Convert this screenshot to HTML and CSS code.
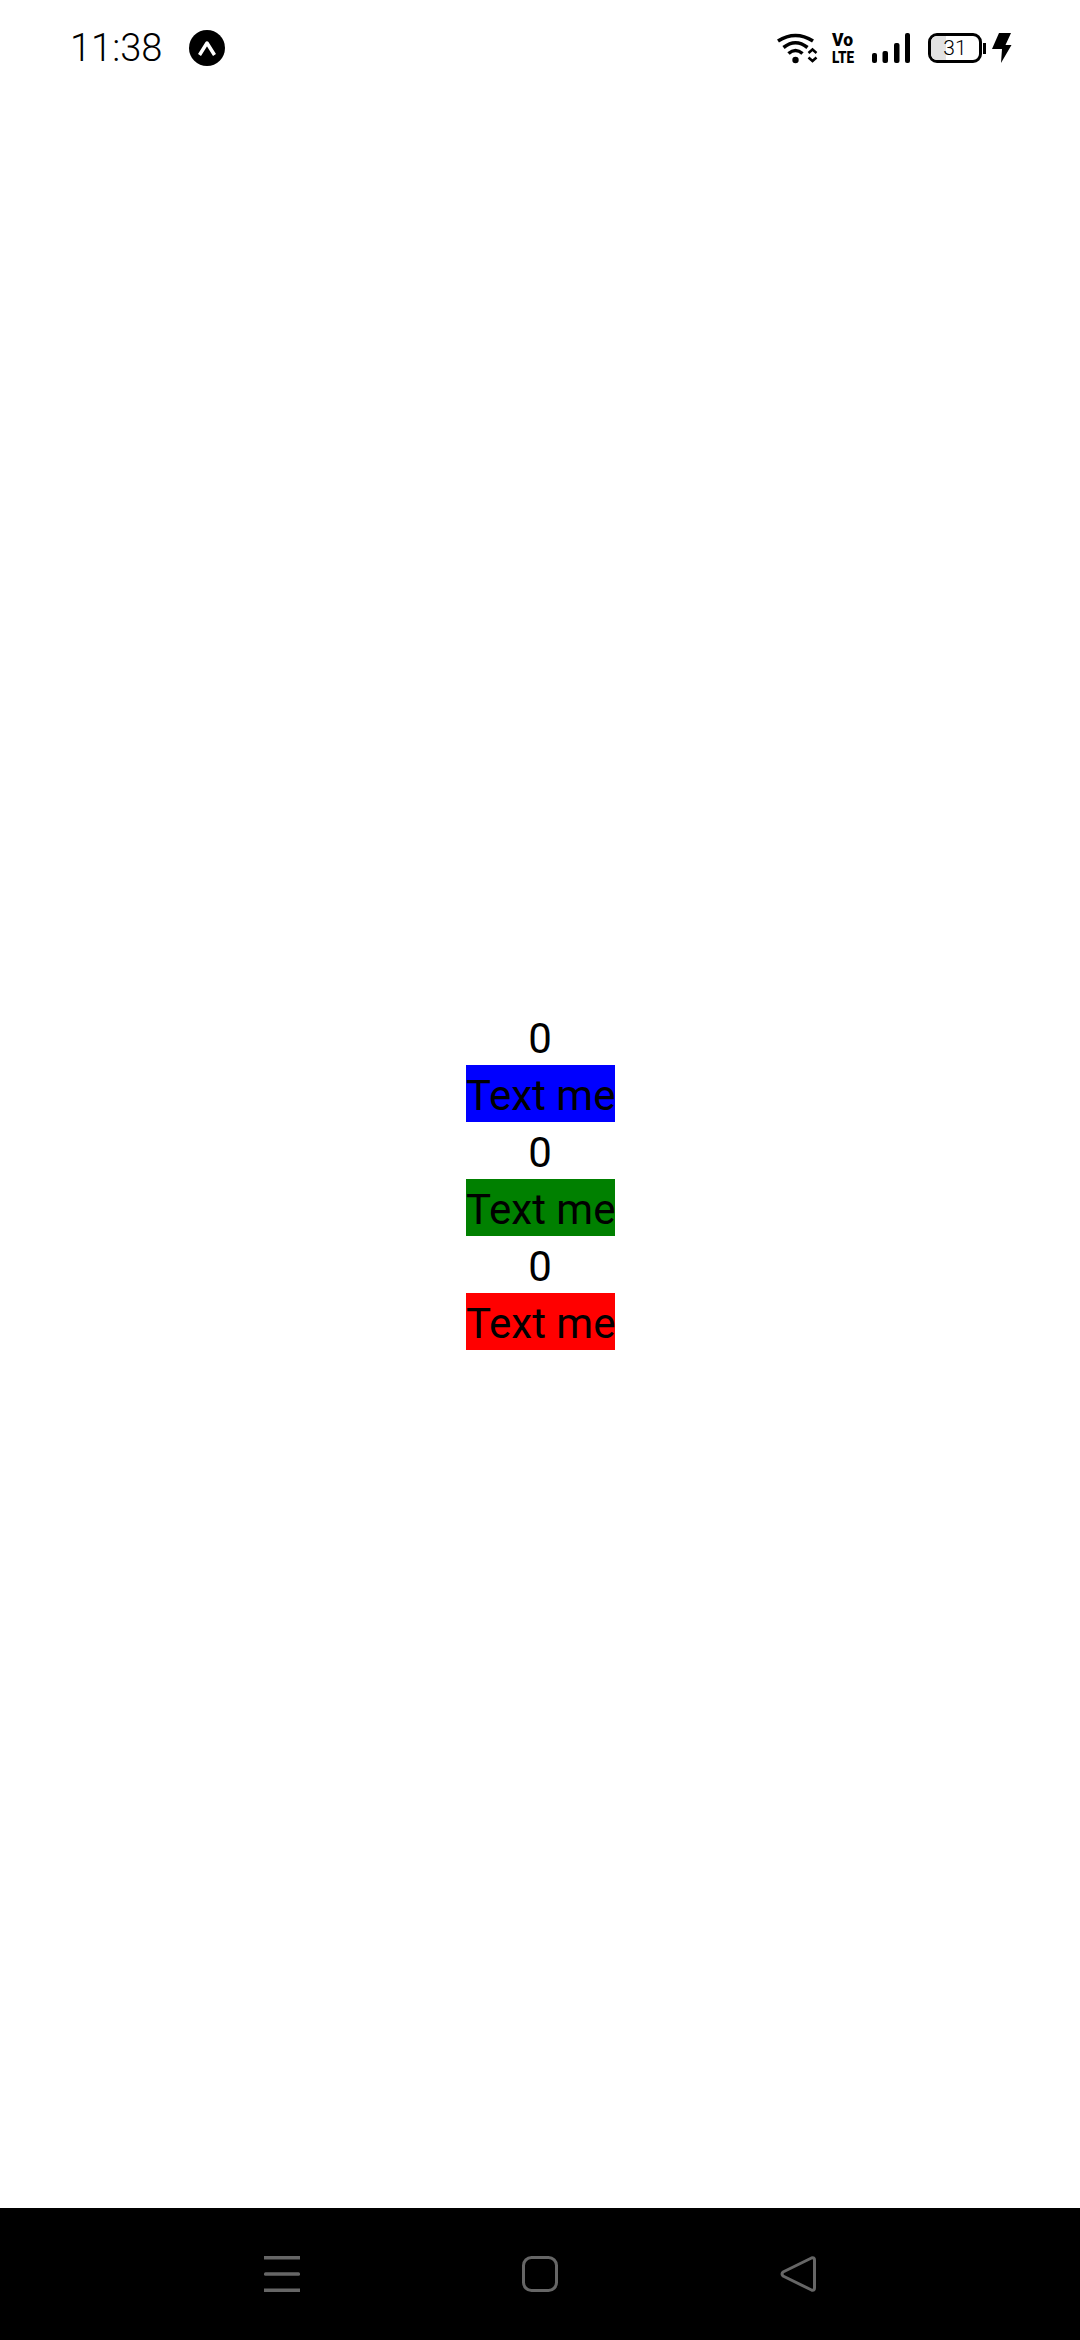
FILE: index.html
```html
<!DOCTYPE html>
<html lang="en">
<head>
<meta charset="utf-8">
<title>Counters</title>
<link rel="stylesheet" href="styles.css">
</head>
<body>
<div class="screen">
  <header class="status">
    <div class="status-left">
      <span class="time">11:38</span>
      <svg class="badge" width="36" height="36" viewBox="0 0 36 36"><circle cx="18" cy="18" r="18" fill="#000"/><path d="M10.500 25 L18 13 L25.500 25" fill="none" stroke="#fff" stroke-width="3.500" stroke-linejoin="round"/></svg>
    </div>
    <div class="status-right">
      <svg class="ico-wifi" width="41" height="32" viewBox="0 0 41 32"><g fill="none" stroke="#000" stroke-width="3.600"><path d="M1 8 Q18.500 -3 36 8"/><path d="M6.500 14.500 Q18.500 5 30.500 14.500"/><path d="M11.500 20.500 Q18.500 14.500 25.500 20.500"/></g><circle cx="18.500" cy="27" r="3.200" fill="#000"/><path d="M31.500 20 L35.500 16.500 L39.500 20 M31.500 24.500 L35.500 28 L39.500 24.500" fill="none" stroke="#000" stroke-width="2.500"/></svg>
      <svg class="ico-volte" width="23" height="30" viewBox="0 0 23 30"><text class="volte-text volte-top" x="0" y="13" textLength="21" lengthAdjust="spacingAndGlyphs">Vo</text><text class="volte-text" x="0" y="29.500" textLength="22" lengthAdjust="spacingAndGlyphs">LTE</text></svg>
      <svg class="ico-signal" width="38" height="30" viewBox="0 0 38 30"><g fill="#000"><rect x="0" y="20" width="5" height="10" rx="2"/><rect x="10.500" y="18" width="5.500" height="12" rx="2"/><rect x="22" y="10" width="5.500" height="20" rx="2"/><rect x="33" y="0" width="5" height="30" rx="2"/></g></svg>
      <div class="battery">
        <div class="battery-body"><div class="battery-fill"></div><span class="battery-level">31</span></div>
        <div class="battery-tip"></div>
      </div>
      <svg class="ico-bolt" width="20" height="30" viewBox="0 0 20 30"><path d="M7 0 L19 0 L13.500 12 L19.500 12 L9 30 L10 16 L0 16 Z" fill="#000"/></svg>
    </div>
  </header>
  <main class="content">
    <span class="count">0</span>
    <button class="text-btn blue">Text me</button>
    <span class="count">0</span>
    <button class="text-btn green">Text me</button>
    <span class="count">0</span>
    <button class="text-btn red">Text me</button>
  </main>
  <nav class="navbar">
    <svg width="36" height="36" viewBox="0 0 36 36"><g fill="#666"><rect x="0" y="0" width="36" height="3.500"/><rect x="0" y="16.300" width="36" height="3.500" rx="1.500"/><rect x="0" y="32.500" width="36" height="3.500"/></g></svg>
    <svg width="36" height="36" viewBox="0 0 36 36"><rect x="1.500" y="1.500" width="33" height="33" rx="8" fill="none" stroke="#666" stroke-width="3"/></svg>
    <svg width="36" height="36" viewBox="0 0 36 36"><path d="M31.500 2 Q34.500 0.800 34.500 4 L34.500 32 Q34.500 35.200 31.500 34 L3 20 Q1 18 3 16 Z" fill="none" stroke="#666" stroke-width="3" stroke-linejoin="round"/></svg>
  </nav>
</div>
</body>
</html>
```
FILE: styles.css
```css
* { box-sizing: border-box; }
html, body { margin: 0; padding: 0; background: #fff; }
.screen {
  width: 1080px;
  height: 2340px;
  display: flex;
  flex-direction: column;
  font-family: Roboto, "Liberation Sans", sans-serif;
  color: #000;
}
.status {
  height: 96px;
  display: flex;
  justify-content: space-between;
  align-items: flex-start;
  padding: 30px 68px 0 70px;
}
.status-left { display: flex; align-items: center; gap: 27px; }
.time { font-size: 38px; font-weight: 300; line-height: 36px; letter-spacing: 0; }
.badge { display: block; }
.status-right { display: flex; align-items: flex-start; padding-top: 3px; }
.status-right svg { display: block; }
.ico-wifi { margin-right: 14px; }
.ico-volte { margin-right: 17px; overflow: visible; }
.ico-signal { margin-right: 18px; }
.volte-text { font-family: Roboto, sans-serif; font-weight: 900; font-size: 17px; fill: #000; }
.volte-top { font-size: 18px; }
.battery { display: flex; align-items: center; height: 30px; margin-right: 6px; }
.battery-body {
  position: relative;
  width: 54px;
  height: 30px;
  border: 3px solid #000;
  border-radius: 9px;
  overflow: hidden;
  display: flex;
  align-items: center;
  justify-content: center;
}
.battery-fill { position: absolute; left: 0; top: 0; bottom: 0; width: 15px; background: #e2e2e2; }
.battery-level { position: relative; font-size: 21px; font-weight: 300; line-height: 24px; }
.battery-tip { width: 3px; height: 11px; margin-left: 1px; background: #000; }
.content {
  flex: 1;
  display: flex;
  flex-direction: column;
  align-items: center;
  justify-content: center;
  padding-top: 54px;
}
.count { height: 57px; font-size: 42px; line-height: 61px; }
.text-btn {
  display: block;
  width: 149px;
  height: 57px;
  margin-left: 1px;
  padding: 2px 0 0;
  border: 0;
  font-family: inherit;
  font-size: 42px;
  line-height: 57px;
  white-space: nowrap;
  color: #000;
}
.blue { background: #0000ff; }
.green { background: #008000; }
.red { background: #ff0000; }
.navbar {
  height: 132px;
  background: #000;
  display: flex;
  justify-content: center;
  align-items: flex-start;
  gap: 222px;
  padding-top: 48px;
}
.navbar svg { display: block; }
```
